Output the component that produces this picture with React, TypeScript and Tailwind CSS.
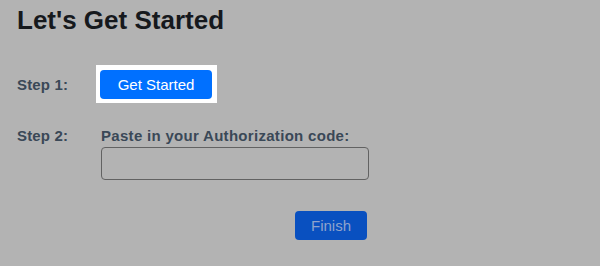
import React from "react";

export default function App() {
  return (
    <div className="w-[600px] h-[266px] bg-[#b3b3b3] font-['Liberation_Sans',Arial,sans-serif] pl-[17px] pt-[5px] overflow-hidden">
      <h1 className="text-[26px] leading-[30px] font-bold text-[#16191d]">Let's Get Started</h1>
      <div className="mt-[35px] flex items-center h-[29px]">
        <div className="w-[83px] text-[15px] leading-[18px] font-bold text-[#3a4857] tracking-[0.01em] pt-[1px]">Step 1:</div>
        <div className="relative">
          <div className="absolute -left-[4px] -top-[5px] -right-[5px] -bottom-[4px] bg-white" />
          <button className="relative w-[112px] h-[29px] rounded-[4px] bg-[#0070ff] text-white text-[15px] leading-[18px]">
            Get Started
          </button>
        </div>
      </div>
      <div className="mt-[28px] flex items-start">
        <div className="w-[84px] text-[15px] leading-[18px] font-bold text-[#3a4857] tracking-[0.01em]">Step 2:</div>
        <div className="flex flex-col w-[268px]">
          <div className="text-[15px] leading-[18px] font-bold text-[#3a4857] tracking-[0.02em] whitespace-nowrap">
            Paste in your Authorization code:
          </div>
          <input className="mt-[2px] h-[33px] w-[268px] border border-[#626262] rounded-[4px] bg-transparent outline-none" />
          <div className="mt-[31px] flex justify-end pr-[2px]">
            <button className="w-[72px] h-[29px] rounded-[4px] bg-[#0950c0] text-[#8fa3cb] text-[15px] leading-[18px]">
              Finish
            </button>
          </div>
        </div>
      </div>
    </div>
  );
}
